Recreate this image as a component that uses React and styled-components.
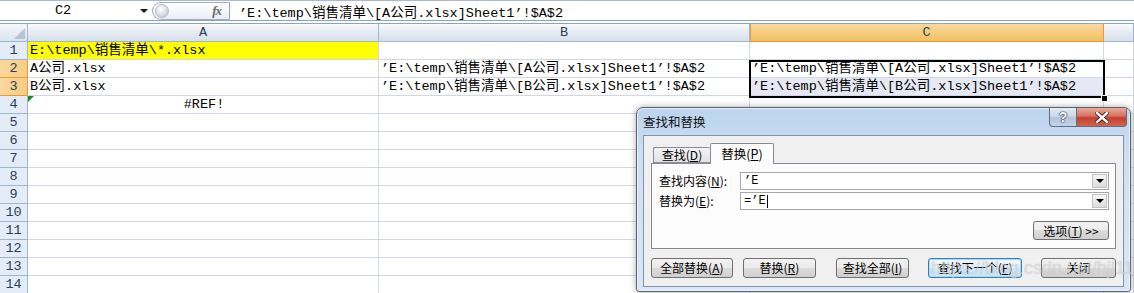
import React from "react";
import styled, { createGlobalStyle, css } from "styled-components";

const GlobalStyle = createGlobalStyle`
  html, body {
    margin: 0;
    padding: 0;
    background: #ffffff;
    overflow: hidden;
  }
`;

const SHEET_FONT = `"Liberation Mono", "Noto Sans CJK SC", monospace`;
const UI_FONT = `"Noto Sans CJK SC", "Liberation Sans", sans-serif`;

const B2 = "’E:\\temp\\销售清单\\[A公司.xlsx]Sheet1’!$A$2";
const B3 = "’E:\\temp\\销售清单\\[B公司.xlsx]Sheet1’!$A$2";

const rows = [
  { a: "E:\\temp\\销售清单\\*.xlsx", yellow: true },
  { a: "A公司.xlsx", b: B2, c: B2, selected: true },
  { a: "B公司.xlsx", b: B3, c: B3, selected: true, shade: true },
  { a: "#REF!", center: true, error: true },
  {}, {}, {}, {}, {}, {}, {}, {}, {}, {},
];

const App = () => {
  return (
    <>
      <GlobalStyle />
      <Page>
        <FormulaBar>
          <NameBox>
            <NameText>C2</NameText>
            <NameArrow />
          </NameBox>
          <FxPill>
            <Knob />
            <FxLabel>fx</FxLabel>
          </FxPill>
          <FormulaInput>{B2}</FormulaInput>
        </FormulaBar>
        <BarGap />

        <Sheet>
          <Grid>
            <Corner />
            <ColHead>A</ColHead>
            <ColHead>B</ColHead>
            <ColHead $active>C</ColHead>
            <ColHead />
            {rows.map((r, i) => (
              <React.Fragment key={i}>
                <RowHead $active={r.selected}>{i + 1}</RowHead>
                <Cell $yellow={r.yellow} $center={r.center}>
                  {r.error && <ErrorMark />}
                  {r.a}
                </Cell>
                <Cell>{r.b}</Cell>
                <Cell $shade={r.shade}>{r.c}</Cell>
                <Cell />
              </React.Fragment>
            ))}
          </Grid>
          <SelectionBox />
          <FillHandle />
        </Sheet>

        <Dialog>
          <TitleBar>
            <Title>查找和替换</Title>
            <CaptionButtons>
              <CapBtn>?</CapBtn>
              <CapBtn $close>
                <svg width="14" height="11" viewBox="0 0 14 11">
                  <path
                    d="M2 1 L12 10 M12 1 L2 10"
                    stroke="#3a2420"
                    strokeWidth="4.2"
                    strokeLinecap="square"
                  />
                  <path
                    d="M2 1 L12 10 M12 1 L2 10"
                    stroke="#ffffff"
                    strokeWidth="2.4"
                    strokeLinecap="square"
                  />
                </svg>
              </CapBtn>
            </CaptionButtons>
          </TitleBar>
          <Client>
            <TabStrip>
              <Tab>
                查找(<u>D</u>)
              </Tab>
              <Tab $selected>
                替换(<u>P</u>)
              </Tab>
            </TabStrip>
            <Panel>
              <FieldRow>
                <FieldLabel>
                  查找内容(<u>N</u>):
                </FieldLabel>
                <Combo>
                  <ComboText>’E</ComboText>
                  <ComboDrop />
                </Combo>
              </FieldRow>
              <FieldRow $top={2}>
                <FieldLabel>
                  替换为(<u>E</u>):
                </FieldLabel>
                <Combo>
                  <ComboText>
                    =’E<Caret />
                  </ComboText>
                  <ComboDrop />
                </Combo>
              </FieldRow>
              <OptionsButton>
                选项(<u>T</u>) &gt;&gt;
              </OptionsButton>
            </Panel>
            <ButtonRow>
              <Button $w={82}>
                全部替换(<u>A</u>)
              </Button>
              <Button $w={74} $gap={10}>
                替换(<u>R</u>)
              </Button>
              <Button $w={73} $gap={20}>
                查找全部(<u>I</u>)
              </Button>
              <Button $w={95} $gap={19} $focused>
                查找下一个(<u>F</u>)
              </Button>
              <Button $w={75} $gap={19}>
                关闭
              </Button>
            </ButtonRow>
          </Client>
          <Watermark>https://blog.csdn.net/hjl1168</Watermark>
        </Dialog>
      </Page>
    </>
  );
};

export default App;

const Page = styled.div`
  position: relative;
  width: 1134px;
  height: 293px;
  overflow: hidden;
  background: #ffffff;
`;

/* ---------- formula bar ---------- */

const FormulaBar = styled.div`
  display: flex;
  align-items: stretch;
  height: 21px;
  box-sizing: border-box;
  border-top: 1px solid #a9bbd3;
  border-bottom: 1px solid #8ea3bd;
  font-family: ${SHEET_FONT};
  font-size: 13.5px;
  color: #000;
`;

const NameBox = styled.div`
  width: 152px;
  display: flex;
  align-items: center;
`;

const NameText = styled.div`
  width: 126px;
  text-align: center;
`;

const NameArrow = styled.div`
  margin-left: 14px;
  width: 0;
  height: 0;
  border-left: 4px solid transparent;
  border-right: 4px solid transparent;
  border-top: 4px solid #1a1a1a;
`;

const FxPill = styled.div`
  position: relative;
  width: 78px;
  margin: 1px 0 0;
  height: 18px;
  box-sizing: border-box;
  border: 1px solid #9fb0c6;
  border-right: 1px solid #8ea3bd;
  border-radius: 9px 0 0 9px;
  background: linear-gradient(#ffffff, #e9eef5);
  display: flex;
  align-items: center;
  justify-content: space-between;
  padding: 0 8px 0 2px;
`;

const Knob = styled.div`
  width: 12px;
  height: 12px;
  border-radius: 50%;
  border: 1px solid #b3bcc8;
  background: radial-gradient(circle at 40% 35%, #ffffff 0%, #d9dee6 55%, #aab3bf 100%);
`;

const FxLabel = styled.div`
  font-family: "Liberation Serif", serif;
  font-style: italic;
  font-weight: bold;
  font-size: 13px;
  color: #6a6a6a;
  letter-spacing: -1px;
`;

const FormulaInput = styled.div`
  flex: 1;
  display: flex;
  align-items: center;
  padding-left: 9px;
  white-space: nowrap;
`;

const BarGap = styled.div`
  height: 3px;
  box-sizing: border-box;
  border-bottom: 1px solid #8ea3bd;
`;

/* ---------- sheet ---------- */

const Sheet = styled.div`
  position: relative;
`;

const Grid = styled.div`
  display: grid;
  grid-template-columns: 28px 351px 371px 354px 1fr;
  grid-auto-rows: 18px;
  font-family: ${SHEET_FONT};
  font-size: 13.5px;
`;

const headBase = css`
  box-sizing: border-box;
  border-right: 1px solid #9eb6ce;
  border-bottom: 1px solid #9eb6ce;
  color: #27415d;
  display: flex;
  align-items: center;
  justify-content: center;
  line-height: 17px;
`;

const Corner = styled.div`
  ${headBase};
  position: relative;
  background: linear-gradient(#f5f8fc, #dbe3ee);
  &::after {
    content: "";
    position: absolute;
    right: 2px;
    bottom: 2px;
    width: 0;
    height: 0;
    border-left: 11px solid transparent;
    border-bottom: 11px solid #b6c3d3;
  }
`;

const ColHead = styled.div`
  ${headBase};
  background: linear-gradient(#f9fbfd, #e4eaf2 55%, #d7dfea);
  ${(p) =>
    p.$active &&
    css`
      background: linear-gradient(#f9d99f, #f1c15f);
      border-right-color: #f29536;
      border-bottom-color: #f29536;
      box-shadow: inset 1px 0 #f29536;
    `}
`;

const RowHead = styled.div`
  ${headBase};
  background: #e4ecf7;
  ${(p) =>
    p.$active &&
    css`
      background: linear-gradient(90deg, #f9d99f, #f6cc82);
      border-right-color: #f29536;
      border-bottom-color: #f29536;
    `}
`;

const Cell = styled.div`
  position: relative;
  box-sizing: border-box;
  border-right: 1px solid #d0d7e5;
  border-bottom: 1px solid #d0d7e5;
  padding-left: 2px;
  white-space: nowrap;
  overflow: visible;
  line-height: 17px;
  color: #000;
  background: ${(p) => (p.$yellow ? "#ffff00" : p.$shade ? "#e6e9f3" : "#ffffff")};
  text-align: ${(p) => (p.$center ? "center" : "left")};
`;

const ErrorMark = styled.span`
  position: absolute;
  left: 0;
  top: 0;
  width: 0;
  height: 0;
  border-top: 6px solid #1f8c1f;
  border-right: 6px solid transparent;
`;

const SelectionBox = styled.div`
  position: absolute;
  left: 749px;
  top: 36px;
  width: 356px;
  height: 38px;
  box-sizing: border-box;
  border: 2px solid #000;
  pointer-events: none;
`;

const FillHandle = styled.div`
  position: absolute;
  left: 1101px;
  top: 71px;
  width: 7px;
  height: 7px;
  box-sizing: border-box;
  background: #000;
  border: 1px solid #fff;
`;

/* ---------- dialog ---------- */

const Dialog = styled.div`
  position: absolute;
  left: 636px;
  top: 107px;
  width: 495px;
  height: 185px;
  box-sizing: border-box;
  border: 1px solid #5a6372;
  border-radius: 7px 7px 3px 3px;
  background: linear-gradient(#bcd4ee, #cfe0f3 30%, #d8e7f6);
  box-shadow: 0 0 6px rgba(0, 0, 0, 0.35), inset 0 0 0 1px rgba(255, 255, 255, 0.6);
  font-family: ${UI_FONT};
  font-size: 12px;
  color: #000;
`;

const TitleBar = styled.div`
  height: 27px;
  display: flex;
  justify-content: space-between;
  align-items: flex-start;
  padding: 0 3px 0 6px;
`;

const Title = styled.div`
  padding-top: 6px;
  font-size: 12.5px;
  line-height: 16px;
  color: #111;
`;

const CaptionButtons = styled.div`
  display: flex;
  margin-top: 0;
`;

const CapBtn = styled.div`
  box-sizing: border-box;
  width: ${(p) => (p.$close ? 50 : 28)}px;
  height: 19px;
  border: 1px solid #5f6f86;
  border-top: none;
  border-left: ${(p) => (p.$close ? "none" : "1px solid #5f6f86")};
  border-radius: ${(p) => (p.$close ? "0 0 4px 0" : "0 0 0 4px")};
  display: flex;
  align-items: center;
  justify-content: center;
  font-family: "Liberation Sans", sans-serif;
  font-weight: bold;
  font-size: 14px;
  color: #fff;
  text-shadow: 0 0 1px #2b3a4f, 0 0 1px #2b3a4f, 0 0 2px #2b3a4f;
  background: ${(p) =>
    p.$close
      ? "linear-gradient(#e9a99c, #d4715f 45%, #c2402c 55%, #d3644d)"
      : "linear-gradient(#e4ecf6, #cbd8e8 45%, #b3c4da 55%, #c4d3e6)"};
`;

const Client = styled.div`
  margin: 0 6px;
  height: 152px;
  box-sizing: border-box;
  border: 1px solid #8193ab;
  background: #f0f0f0;
  padding: 7px 7px 0;
  display: flex;
  flex-direction: column;
`;

const TabStrip = styled.div`
  height: 20px;
  display: flex;
  align-items: flex-end;
  padding-left: 2px;
`;

const Tab = styled.div`
  position: relative;
  box-sizing: border-box;
  border: 1px solid #898c95;
  border-radius: 2px 2px 0 0;
  display: flex;
  align-items: center;
  justify-content: center;
  line-height: 14px;
  ${(p) =>
    p.$selected
      ? css`
          width: 64px;
          height: 21px;
          margin-bottom: -1px;
          border-bottom: none;
          background: #fcfcfc;
          z-index: 1;
          font-size: 12.5px;
        `
      : css`
          width: 57px;
          height: 16px;
          border-right: none;
          background: linear-gradient(#f3f3f3, #e3e3e3);
        `}
`;

const Panel = styled.div`
  height: 86px;
  box-sizing: border-box;
  border: 1px solid #898c95;
  background: #fcfcfc;
  padding: 8px 6px 0 7px;
  display: flex;
  flex-direction: column;
`;

const FieldRow = styled.div`
  display: flex;
  align-items: center;
  height: 18px;
  margin-top: ${(p) => p.$top || 0}px;
`;

const FieldLabel = styled.div`
  width: 81px;
  line-height: 14px;
`;

const Combo = styled.div`
  width: 369px;
  height: 18px;
  box-sizing: border-box;
  border: 1px solid #a3a6ad;
  background: #fff;
  display: flex;
  align-items: center;
  justify-content: space-between;
`;

const ComboText = styled.div`
  padding-left: 3px;
  font-family: ${SHEET_FONT};
  font-size: 12px;
  display: flex;
  align-items: center;
`;

const Caret = styled.span`
  display: inline-block;
  width: 1px;
  height: 13px;
  background: #000;
  margin-left: 1px;
`;

const ComboDrop = styled.div`
  width: 15px;
  height: 14px;
  margin-right: 1px;
  box-sizing: border-box;
  border: 1px solid #c3c3c3;
  background: linear-gradient(#f6f6f6, #dcdcdc);
  display: flex;
  align-items: center;
  justify-content: center;
  &::after {
    content: "";
    border-left: 4px solid transparent;
    border-right: 4px solid transparent;
    border-top: 4px solid #000;
  }
`;

const buttonLook = css`
  box-sizing: border-box;
  height: 19px;
  border: 1px solid #707070;
  border-radius: 3px;
  background: linear-gradient(#f2f2f2, #ebebeb 50%, #dddddd 50%, #cfcfcf);
  display: flex;
  align-items: center;
  justify-content: center;
  line-height: 14px;
  white-space: nowrap;
`;

const OptionsButton = styled.div`
  ${buttonLook};
  align-self: flex-end;
  width: 76px;
  margin-top: 11px;
  margin-right: 0;
`;

const ButtonRow = styled.div`
  display: flex;
  margin-top: 9px;
`;

const Button = styled.div`
  ${buttonLook};
  height: 20px;
  width: ${(p) => p.$w}px;
  margin-left: ${(p) => p.$gap || 0}px;
  ${(p) =>
    p.$focused &&
    css`
      border-color: #3c7fb1;
      background: linear-gradient(#f3f9fd, #e3f1fb 50%, #d3eafa 50%, #c7e4f8);
      box-shadow: inset 0 0 0 1px #a8d8f5;
    `}
`;

const Watermark = styled.div`
  position: absolute;
  left: 294px;
  top: 150px;
  font-family: "Liberation Sans", sans-serif;
  font-size: 18px;
  white-space: nowrap;
  color: rgba(255, 255, 255, 0.5);
  text-shadow: 0 0 1px rgba(90, 90, 90, 0.4);
  pointer-events: none;
`;
